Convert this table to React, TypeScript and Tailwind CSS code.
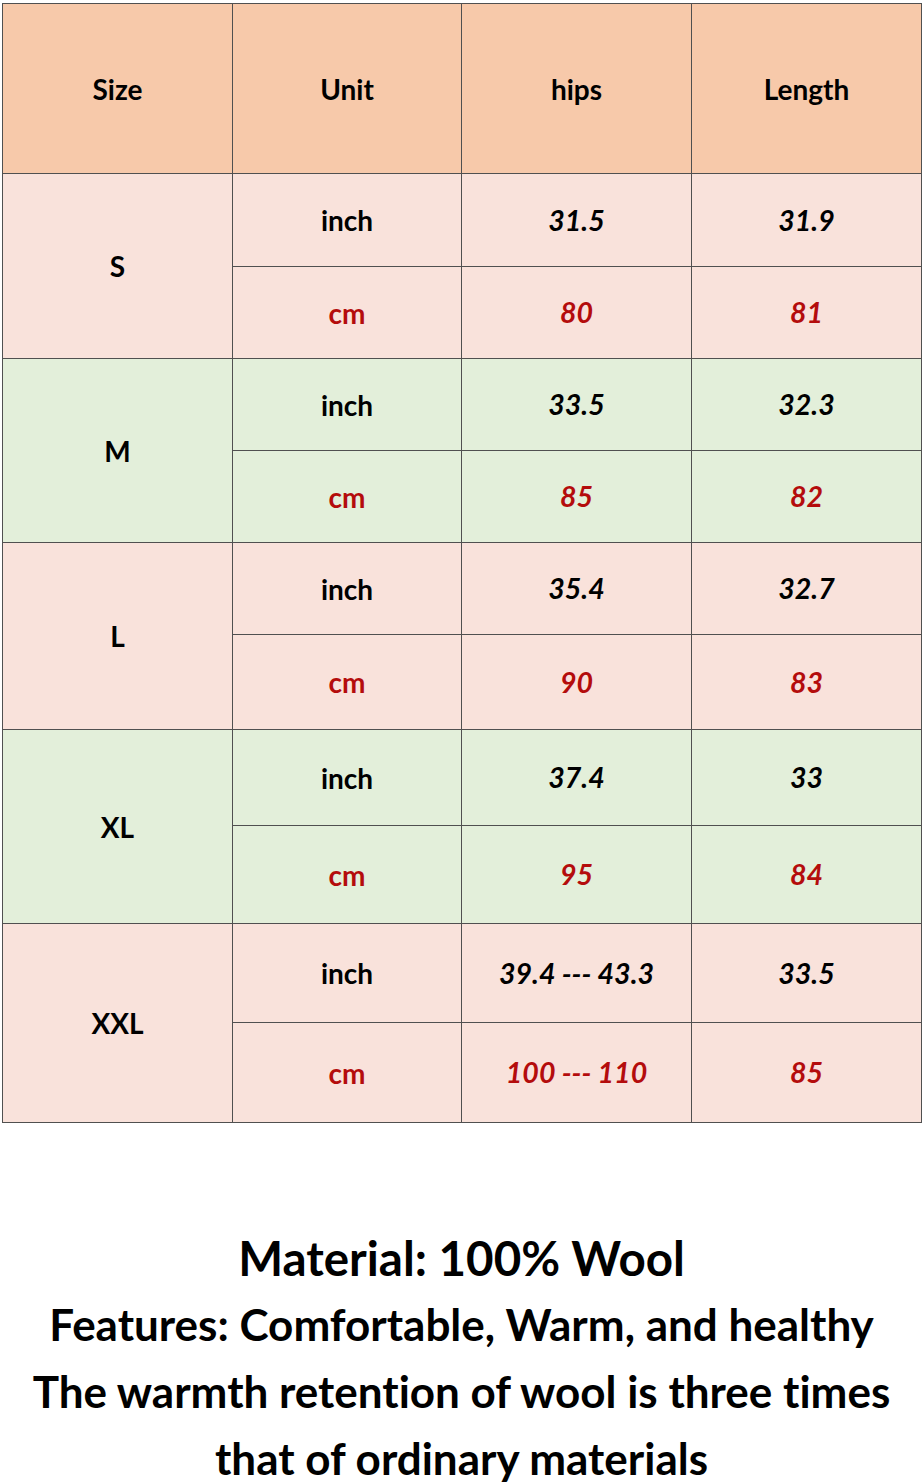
const rows = [
  { size: "S", bg: "bg-[#f9e2db]", h: [93, 92], inch: ["31.5", "31.9"], cm: ["80", "81"] },
  { size: "M", bg: "bg-[#e3efda]", h: [92, 92], inch: ["33.5", "32.3"], cm: ["85", "82"] },
  { size: "L", bg: "bg-[#f9e2db]", h: [92, 95], inch: ["35.4", "32.7"], cm: ["90", "83"] },
  { size: "XL", bg: "bg-[#e3efda]", h: [96, 98], inch: ["37.4", "33"], cm: ["95", "84"] },
  { size: "XXL", bg: "bg-[#f9e2db]", h: [99, 100], inch: ["39.4 --- 43.3", "33.5"], cm: ["100 --- 110", "85"] },
];

const cell = "border border-[#505050] text-center align-middle p-0";

export default function App() {
  return (
    <div className="w-[923px] h-[1484px] bg-white pt-[3px] pl-[2px] font-['Lato','Liberation_Sans',sans-serif] font-bold text-black overflow-hidden [font-variant-ligatures:none]">
      <table className="border-collapse w-[919px] table-fixed">
        <colgroup>
          <col className="w-[230px]" />
          <col className="w-[229px]" />
          <col className="w-[230px]" />
          <col className="w-[230px]" />
        </colgroup>
        <thead>
          <tr className="h-[170px] bg-[#f7c9aa] text-[28px]">
            <th className={cell}>Size</th>
            <th className={cell}>Unit</th>
            <th className={cell}>hips</th>
            <th className={cell}>Length</th>
          </tr>
        </thead>
        <tbody>
          {rows.map((r) => (
            <>
              <tr key={r.size + "i"} className={r.bg} style={{ height: r.h[0] }}>
                <td rowSpan={2} className={`${cell} text-[28px]`}>{r.size}</td>
                <td className={`${cell} text-[28px]`}>inch</td>
                <td className={`${cell} text-[28.5px] italic`}>{r.inch[0]}</td>
                <td className={`${cell} text-[28.5px] italic`}>{r.inch[1]}</td>
              </tr>
              <tr key={r.size + "c"} className={r.bg} style={{ height: r.h[1] }}>
                <td className={`${cell} text-[28px] text-[#b40c0c]`}>cm</td>
                <td className={`${cell} text-[28.5px] italic text-[#b40c0c]`}>{r.cm[0]}</td>
                <td className={`${cell} text-[28.5px] italic text-[#b40c0c]`}>{r.cm[1]}</td>
              </tr>
            </>
          ))}
        </tbody>
      </table>

      <div className="mt-[101px] pr-[2px] flex flex-col items-center text-center whitespace-nowrap">
        <div className="text-[47.5px] leading-[67px]">Material: 100% Wool</div>
        <div className="text-[44px] leading-[67px]">Features: Comfortable, Warm, and healthy</div>
        <div className="text-[44px] leading-[67px]">The warmth retention of wool is three times</div>
        <div className="text-[44px] leading-[67px]">that of ordinary materials</div>
      </div>
    </div>
  );
}
